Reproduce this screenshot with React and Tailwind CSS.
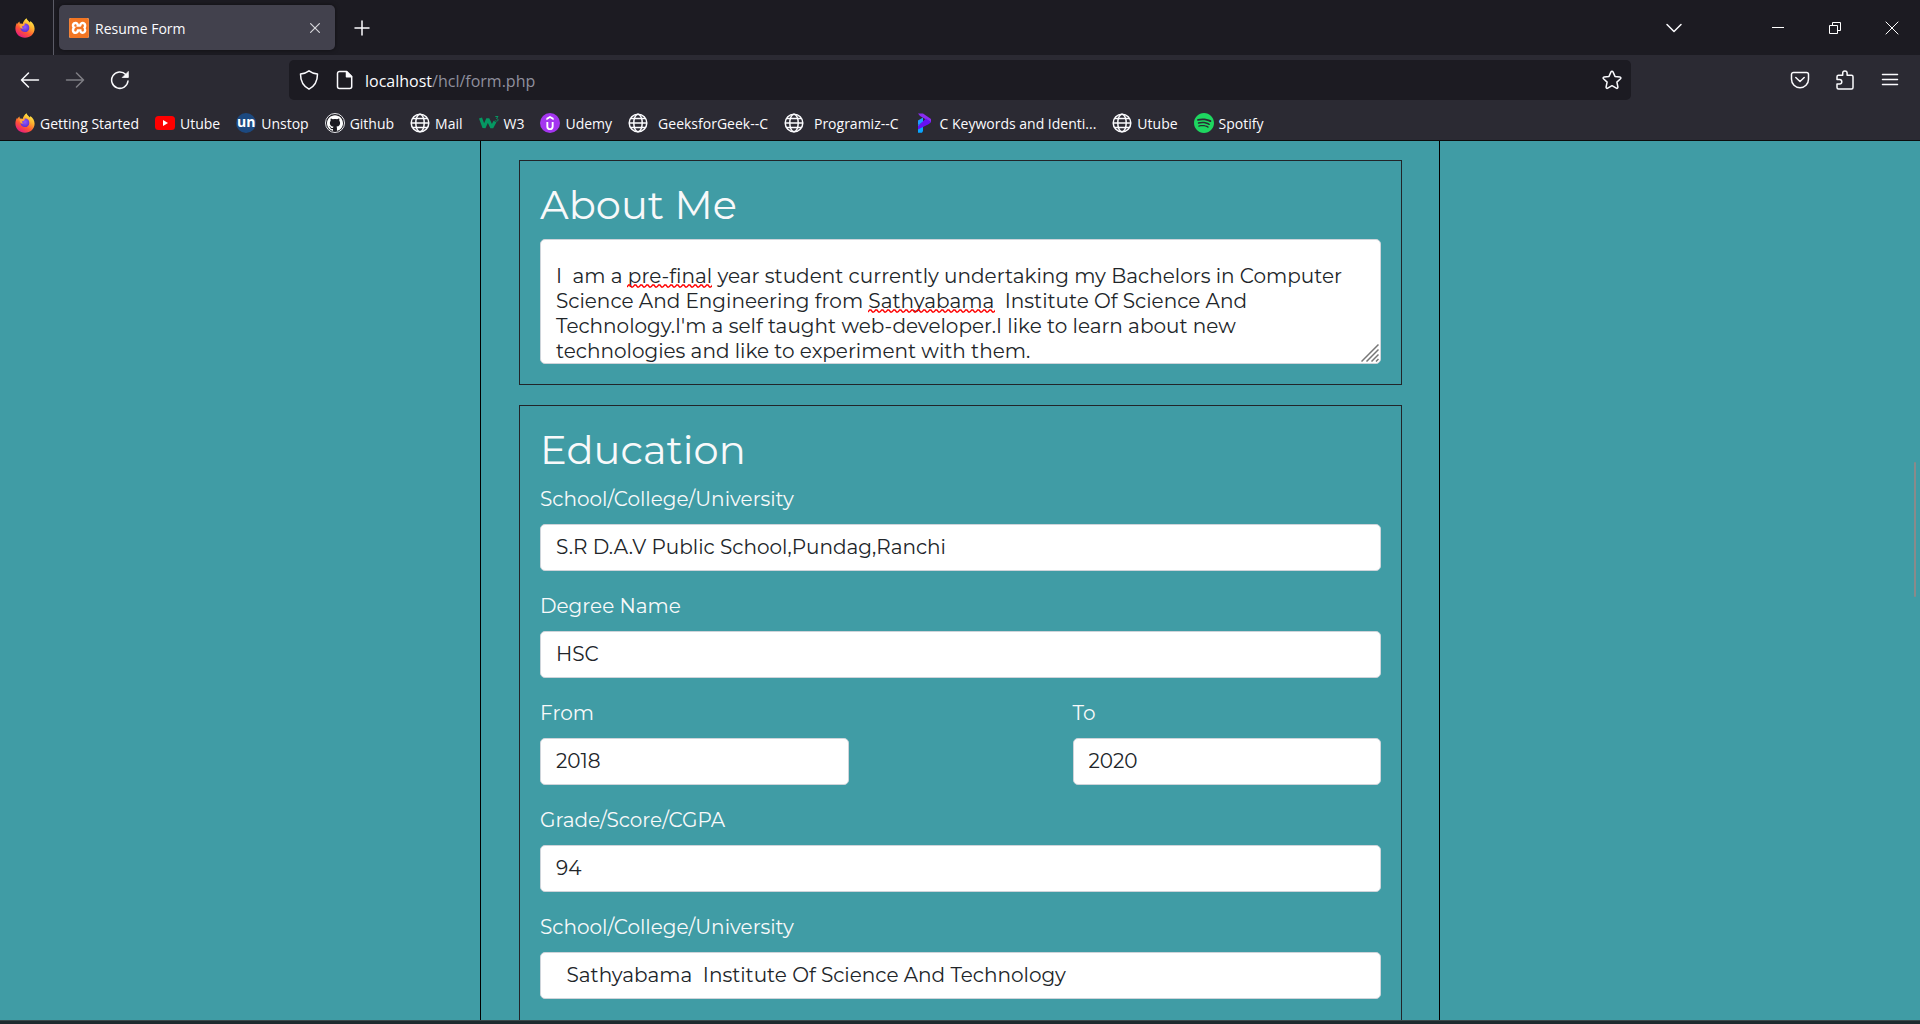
import { useId } from "react";
import { SiXampp, SiSpotify, SiUdemy, SiGithub } from "react-icons/si";

function Firefox() {
  const id = useId();
  return (
    <svg viewBox="0 0 20 20" className="size-5" aria-hidden="true">
      <defs>
        <linearGradient id={id + "a"} x1="0.85" y1="0.05" x2="0.25" y2="1">
          <stop offset="0" stopColor="#fff44f" />
          <stop offset="0.35" stopColor="#ffb02e" />
          <stop offset="0.65" stopColor="#ff5634" />
          <stop offset="1" stopColor="#e31587" />
        </linearGradient>
        <radialGradient id={id + "b"} cx="0.5" cy="0.4" r="0.6">
          <stop offset="0" stopColor="#9059ff" />
          <stop offset="1" stopColor="#5b2fd0" />
        </radialGradient>
      </defs>
      <path
        fill={`url(#${id}a)`}
        d="M11.6 0.2c.3 2 2.200 2.600 3.300 4.200.3-.4.4-.8.4-1.300 2.500 1.800 4.300 4.600 4.300 7.600 0 5.100-4.200 9-9.600 9S.4 15.800.4 10.700c0-2.300.6-4.500 1.700-6l.3 1.200c.6-1 1.200-1.700 2.100-2.300l.3 1.800c1 0 2 .2 2.800.6.7-2.600 2-4.500 4-5.800z"
      />
      <path
        fill={`url(#${id}b)`}
        d="M9.700 5.600c2.900-.2 4.700 1.700 4.600 4.300-.1 2.500-2 4.200-4.400 4.200s-4.300-1.600-4.300-3.800c0-1.200.5-2 1.200-2.500 1.100.2 2-.1 2.600-.6z"
      />
      <path fill="#ffa436" d="M4.500 6.300c1.800-.9 3.800-.3 5.100.2-.4 1.200-2 1.300-2.400 1.900-.4.700.2 1.600 1.500 1.600-1.300 1-2.900.5-3.400-.6-.4-.9-.8-2-.8-3.100z" />
    </svg>
  );
}

function Globe() {
  return (
    <svg viewBox="0 0 20 20" className="size-5" fill="none" stroke="#fbfbfe" strokeWidth="1.500" aria-hidden="true">
      <circle cx="10" cy="10" r="8.800" />
      <ellipse cx="10" cy="10" rx="4.200" ry="8.800" />
      <path d="M1.500 10h17M3 5.500h14M3 14.500h14" strokeWidth="1.300" />
    </svg>
  );
}

function YouTube() {
  return (
    <svg viewBox="0 0 20 20" className="size-5" aria-hidden="true">
      <rect y="3" width="20" height="14" rx="3.500" fill="#f00" />
      <path d="M8 7l5 3-5 3z" fill="#fff" />
    </svg>
  );
}

function Unstop() {
  return (
    <span className="flex size-5 items-center justify-center rounded-full bg-[#1c4980] pb-0.5 text-[14px] leading-none font-bold text-white">
      un
    </span>
  );
}

function Github() {
  return (
    <span className="flex size-5 items-center justify-center rounded-full border border-[#e8e8ec] bg-[#1c1b22]">
      <SiGithub className="size-4 text-white" />
    </span>
  );
}

function W3() {
  return (
    <svg viewBox="0 0 20 20" className="size-5" fill="none" stroke="#059862" aria-hidden="true">
      <path d="M1.500 5l3.500 9.500L8.800 6l4 8.500L16 8.500" strokeWidth="3.200" strokeLinejoin="bevel" />
      <path d="M16.300 3.500h2.700l-1.500 2c2 0 2 2.700 0 2.700-.7 0-1.200-.3-1.400-.8" strokeWidth="1" />
    </svg>
  );
}

function Udemy() {
  return (
    <span className="flex size-5 items-center justify-center rounded-full bg-[#a435f0]">
      <SiUdemy className="size-3.5 text-white" />
    </span>
  );
}

function Programiz() {
  return (
    <svg viewBox="0 0 20 20" className="size-5" aria-hidden="true">
      <path d="M3 7.500l5-3v4.500L3 12z" fill="#1e9bff" />
      <path d="M3 12l5-3v9l-1 1.800H3z" fill="#0aa5ff" />
      <path d="M3 .5h5l8 5.500v3.500L11 6.500 5 3z" fill="#8a2cf0" />
      <path d="M11 5.500l5 3.500-2 2-11 5.500V13z" fill="#6610f2" />
    </svg>
  );
}

const BOOKMARKS = [
  { label: "Getting Started", icon: <Firefox /> },
  { label: "Utube", icon: <YouTube /> },
  { label: "Unstop", icon: <Unstop /> },
  { label: "Github", icon: <Github /> },
  { label: "Mail", icon: <Globe /> },
  { label: "W3", icon: <W3 /> },
  { label: "Udemy", icon: <Udemy /> },
  { label: "GeeksforGeek--C", icon: <Globe />, wide: true },
  { label: "Programiz--C", icon: <Globe />, wide: true },
  { label: "C Keywords and Identi...", icon: <Programiz /> },
  { label: "Utube", icon: <Globe /> },
  { label: "Spotify", icon: <SiSpotify className="size-5 text-[#1ed760]" /> },
];

function IconButton({ label, className = "w-[45px]", children }) {
  return (
    <button type="button" aria-label={label} className={"flex h-10 shrink-0 items-center justify-center " + className}>
      {children}
    </button>
  );
}

function Line({ children, size = "size-5", width = 1.5, className = "" }) {
  return (
    <svg
      viewBox="0 0 20 20"
      className={size + " " + className}
      fill="none"
      stroke="#fbfbfe"
      strokeWidth={width}
      strokeLinecap="round"
      strokeLinejoin="round"
      aria-hidden="true"
    >
      {children}
    </svg>
  );
}

function TitleBar() {
  return (
    <div className="flex h-[55px] items-center bg-[#1c1b22]">
      <div className="flex h-full w-[54px] shrink-0 items-center border-r border-[#5b5b66] pl-[15px]">
        <Firefox />
      </div>
      <div className="ml-[5px] flex h-[45px] w-[276px] items-center rounded-[5px] bg-[#42414d] pr-1 pl-2.5 shadow-[0_0_4px_rgba(0,0,0,0.5)]">
        <span className="flex size-5 items-center justify-center rounded-[2px] bg-white">
          <SiXampp className="size-5 text-[#f37623]" />
        </span>
        <span className="flex-1 pt-0.5 pl-1.5 text-[14px]">Resume Form</span>
        <IconButton label="Close tab" className="w-8">
          <Line size="size-4" width={1.5} className="opacity-80">
            <path d="M4.500 4.500l11 11M15.500 4.500l-11 11" />
          </Line>
        </IconButton>
      </div>
      <IconButton label="New tab" className="ml-1 w-[45px]">
        <Line>
          <path d="M10 3v14M3 10h14" />
        </Line>
      </IconButton>
      <div className="flex-1" />
      <IconButton label="List all tabs" className="mr-[53px] w-[45px]">
        <Line>
          <path d="M3 6.500l7 7 7-7" />
        </Line>
      </IconButton>
      <IconButton label="Minimize" className="w-[57px]">
        <svg viewBox="0 0 12 12" className="size-3" stroke="#fff" aria-hidden="true">
          <path d="M0 5.500h12" />
        </svg>
      </IconButton>
      <IconButton label="Restore" className="w-[57px]">
        <svg viewBox="0 0 12 12" className="size-3" stroke="#fff" fill="none" aria-hidden="true">
          <path d="M.5 3.500h8v8h-8zM3.500 3.500v-3h8v8h-3" />
        </svg>
      </IconButton>
      <IconButton label="Close" className="w-[57px]">
        <svg viewBox="0 0 14 14" className="size-3.5" stroke="#fff" fill="none" aria-hidden="true">
          <path d="M.7 .7l12.600 12.600M13.300 .7L.7 13.300" />
        </svg>
      </IconButton>
    </div>
  );
}

function NavBar() {
  return (
    <div className="flex h-[50px] items-center pr-2 pl-[7px]">
      <IconButton label="Back">
        <Line>
          <path d="M1.500 10h17M8.500 3l-7 7 7 7" />
        </Line>
      </IconButton>
      <IconButton label="Forward">
        <Line className="opacity-40">
          <path d="M1.500 10h17M11.500 3l7 7-7 7" />
        </Line>
      </IconButton>
      <IconButton label="Reload">
        <Line>
          <path d="M18 11a8.200 8.200 0 1 1-2.200-6.500L17.500 6" />
          <path d="M18.300 1.800v5.700h-5.700z" fill="#fbfbfe" strokeWidth="0.800" />
        </Line>
      </IconButton>
      <div className="w-[147px] shrink" />
      <div className="flex h-10 flex-1 items-center rounded-[5px] bg-[#1c1b22] pl-2.5">
        <Line>
          <path d="M10 .8c2.200 1.700 5 2.700 8.500 3.200 0 6.600-2.500 12-8.500 15.200C4 16 1.500 10.600 1.500 4 5 3.500 7.800 2.500 10 .8z" />
        </Line>
        <Line className="ml-4">
          <path d="M4.500 1.500h7.200l5 5v10a2 2 0 0 1-2 2H4.500a2 2 0 0 1-2-2v-13a2 2 0 0 1 2-2z" />
          <path d="M11.500 1.700v5h5z" fill="#fbfbfe" />
        </Line>
        <div className="relative ml-2.5 h-10 flex-1">
          <div className="pointer-events-none absolute inset-0 flex items-center pt-0.5 text-[16px]" aria-hidden="true">
            <span>localhost</span>
            <span className="text-[#8f8f9d]">/hcl/form.php</span>
          </div>
          <input aria-label="Address" className="h-full w-full bg-transparent text-transparent outline-none" />
        </div>
        <IconButton label="Bookmark this page" className="w-[38px]">
          <Line>
            <path d="M10 1.200c.5 0 .8.300 1 .700l2 4.500 4.900.5c1 .1 1.300 1.200.6 1.900l-3.600 3.300 1 4.900c.2 1-.7 1.700-1.600 1.200L10 15.700l-4.300 2.500c-.9.500-1.800-.2-1.600-1.200l1-4.900L1.500 8.800c-.7-.7-.4-1.800.6-1.900l4.900-.5 2-4.500c.2-.4.5-.7 1-.7z" />
          </Line>
        </IconButton>
      </div>
      <div className="w-[146px] shrink" />
      <IconButton label="Save to Pocket">
        <Line>
          <path d="M3.500 2.500h13a2 2 0 0 1 2 2v4.700a8.500 8.500 0 0 1-17 0V4.500a2 2 0 0 1 2-2zM5.800 7.500l4.200 4 4.200-4" />
        </Line>
      </IconButton>
      <IconButton label="Extensions">
        <Line>
          <path d="M3.500 19a1.500 1.500 0 0 1-1.500-1.500V14h2.500a2.300 2.300 0 0 0 0-4.600H2V6.700a1.500 1.500 0 0 1 1.500-1.500h4.200V3.100a2.200 2.200 0 0 1 4.400 0v2.100h4.400A1.500 1.500 0 0 1 18 6.700v10.800a1.500 1.500 0 0 1-1.500 1.500z" />
        </Line>
      </IconButton>
      <IconButton label="Open menu">
        <Line>
          <path d="M2.500 4.500h15M2.500 9.500h15M2.500 14.500h15" />
        </Line>
      </IconButton>
    </div>
  );
}

function BookmarksBar() {
  return (
    <nav aria-label="Bookmarks" className="flex h-[35px] items-center gap-4 pl-[15px]">
      {BOOKMARKS.map(({ label, icon, wide }, i) => (
        <a key={i} href="#" className={"flex shrink-0 items-center " + (wide ? "gap-2.5" : "gap-[5px]")}>
          {icon}
          <span className="pt-0.5 text-[14px] leading-5 whitespace-nowrap">{label}</span>
        </a>
      ))}
    </nav>
  );
}

function Card({ title, className = "", children }) {
  return (
    <section className={"border border-[#212529] px-5 pt-5 " + className}>
      <h2 className="mb-2.5 text-[40px] leading-[48px] font-normal">{title}</h2>
      {children}
    </section>
  );
}

function Field({ label, value }) {
  const id = useId();
  return (
    <div className="mb-5">
      <label htmlFor={id} className="mb-2.5 block leading-[30px]">
        {label}
      </label>
      <input
        id={id}
        defaultValue={value}
        className="block h-[47px] w-full rounded-[5px] border border-[#ced4da] bg-white px-[15px] pb-0.5 text-[#212529] outline-none"
      />
    </div>
  );
}

function Squiggle({ className }) {
  const id = useId();
  return (
    <svg className={"pointer-events-none absolute h-1 " + className} aria-hidden="true">
      <defs>
        <pattern id={id} width="6" height="4" patternUnits="userSpaceOnUse">
          <path d="M0 3l1.500-2h1.500l1.500 2H6" fill="none" stroke="#f00" strokeWidth="1.300" />
        </pattern>
      </defs>
      <rect width="100%" height="4" fill={`url(#${id})`} />
    </svg>
  );
}

const ABOUT =
  "I  am a pre-final year student currently undertaking my Bachelors in Computer Science And Engineering from Sathyabama  Institute Of Science And Technology.I'm a self taught web-developer.I like to learn about new technologies and like to experiment with them.";

export default function App() {
  return (
    <div className="flex h-screen flex-col overflow-hidden bg-[#409ca5]">
      <header className="shrink-0 border-b border-[#0c0c0d] bg-[#2b2a33] font-['Open_Sans',sans-serif] text-[#fbfbfe]">
        <TitleBar />
        <NavBar />
        <BookmarksBar />
      </header>
      <main className="relative flex min-h-0 flex-1 justify-center font-['Montserrat','Inter',sans-serif] text-[20px] text-[#f8f9fa]">
        <form className="flex w-1/2 flex-col gap-5 overflow-hidden border-x border-black pt-[19px] pr-[37px] pl-[38px]">
          <Card title="About Me" className="pb-5">
            <div className="relative">
              <textarea
                aria-label="About Me"
                spellCheck={false}
                defaultValue={ABOUT}
                className="block h-[125px] w-full resize-none overflow-hidden rounded-[5px] border border-[#ced4da] bg-white px-[15px] pt-6 leading-[25px] text-[#212529] outline-none"
              />
              <Squiggle className="top-[45px] left-[87px] w-[85px]" />
              <Squiggle className="top-[70px] left-[328px] w-[127px]" />
              <svg viewBox="0 0 18 18" className="pointer-events-none absolute right-0.5 bottom-0.5 size-[18px]" stroke="#777" strokeWidth="1.500" aria-hidden="true">
                <path d="M.5 17.500l17-17M5.500 17.500l12-12M10.500 17.500l7-7M15 17.500l2.500-2.500" />
              </svg>
            </div>
          </Card>
          <Card title="Education" className="min-h-0 flex-1 border-b-0">
            <Field label="School/College/University" value="S.R D.A.V Public School,Pundag,Ranchi" />
            <Field label="Degree Name" value="HSC" />
            <div className="grid grid-cols-2 gap-x-56">
              <Field label="From" value="2018" />
              <Field label="To" value="2020" />
            </div>
            <Field label="Grade/Score/CGPA" value="94" />
            <Field label="School/College/University" value="  Sathyabama  Institute Of Science And Technology" />
          </Card>
        </form>
        <div className="absolute top-[321px] right-1 h-[135px] w-0.5 rounded-full bg-[#8a8a8a]" />
      </main>
      <footer className="h-1 shrink-0 border-t border-[#3a4a4c] bg-[#1d2a2e]" />
    </div>
  );
}
